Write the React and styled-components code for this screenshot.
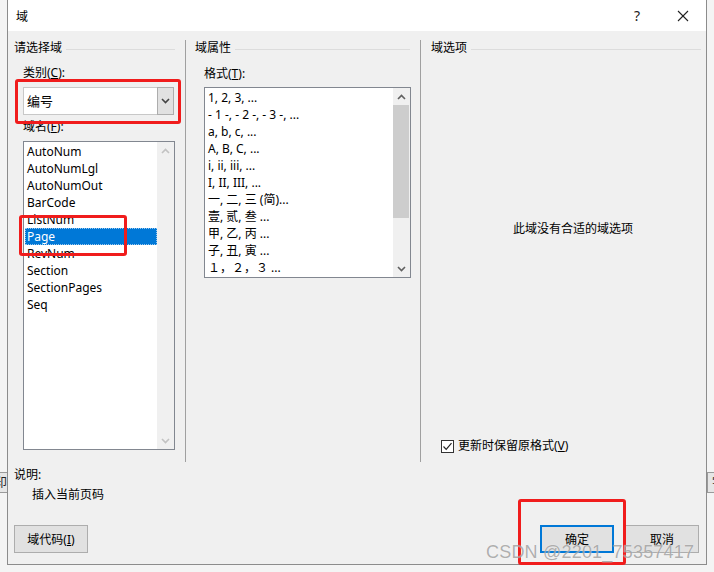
import React from "react";
import styled, { createGlobalStyle } from "styled-components";

const GlobalStyle = createGlobalStyle`
  html, body {
    margin: 0;
    padding: 0;
    background: #f4f4f4;
  }
  * {
    box-sizing: border-box;
  }
`;

const FONT = `"Noto Sans", "Noto Sans CJK SC", sans-serif`;

const categories = [
    "AutoNum", "AutoNumLgl", "AutoNumOut", "BarCode", "ListNum",
    "Page", "RevNum", "Section", "SectionPages", "Seq",
];

const formats = [
    "1, 2, 3, ...",
    "- 1 -, - 2 -, - 3 -, ...",
    "a, b, c, ...",
    "A, B, C, ...",
    "i, ii, iii, ...",
    "I, II, III, ...",
    "一, 二, 三 (简)...",
    "壹, 贰, 叁 ...",
    "甲, 乙, 丙 ...",
    "子, 丑, 寅 ...",
    "１，２，３ ...",
];

const Chevron = ({ up, color = "#333", w = 9, h = 5 }) => (
    <svg width={w} height={h + 1} viewBox="0 0 9 6">
        <polyline
            points={up ? "1,5 4.5,1.5 8,5" : "1,1 4.5,4.5 8,1"}
            fill="none"
            stroke={color}
            strokeWidth="1.6"
        />
    </svg>
);

const App = () => {
    return (
        <Page>
            <GlobalStyle />

            <EdgeColumn>
                <Fragment side="left">印</Fragment>
            </EdgeColumn>

            <Dialog>
                <TitleBar>
                    <Title>域</Title>
                    <TitleButton>?</TitleButton>
                    <TitleButton>
                        <svg width="12" height="12" viewBox="0 0 12 12">
                            <line x1="1" y1="1" x2="11" y2="11" stroke="#222" strokeWidth="1.1" />
                            <line x1="11" y1="1" x2="1" y2="11" stroke="#222" strokeWidth="1.1" />
                        </svg>
                    </TitleButton>
                </TitleBar>

                <Body>
                    <Groups>
                        <Group width="177px">
                            <GroupHeader pl={6} pr={10}>
                                <span>请选择域</span>
                                <HeaderLine />
                            </GroupHeader>
                            <GroupBody pl={15} pr={10}>
                                <Label mt={9}>类别(<u>C</u>):</Label>
                                <Combo>
                                    <ComboText>编号</ComboText>
                                    <ComboButton>
                                        <Chevron color="#444" />
                                    </ComboButton>
                                </Combo>
                                <Label mt={4}>域名(<u>F</u>):</Label>
                                <ListBox mt={6} h={309}>
                                    <ListItems>
                                        {categories.map(c => (
                                            <Item key={c} selected={c === "Page"}>{c}</Item>
                                        ))}
                                    </ListItems>
                                    <ScrollBar>
                                        <Arrow><Chevron up color="#c2c2c2" /></Arrow>
                                        <Track />
                                        <Arrow><Chevron color="#c2c2c2" /></Arrow>
                                    </ScrollBar>
                                </ListBox>
                            </GroupBody>
                        </Group>

                        <Group width="235px" divided>
                            <GroupHeader pl={9} pr={10}>
                                <span>域属性</span>
                                <HeaderLine />
                            </GroupHeader>
                            <GroupBody pl={18} pr={9}>
                                <Label mt={10}>格式(<u>T</u>):</Label>
                                <ListBox mt={5} h={191}>
                                    <ListItems>
                                        {formats.map(f => (
                                            <Item key={f}>{f}</Item>
                                        ))}
                                    </ListItems>
                                    <ScrollBar>
                                        <Arrow><Chevron up color="#606060" /></Arrow>
                                        <Track>
                                            <Thumb style={{ height: 113 }} />
                                        </Track>
                                        <Arrow><Chevron color="#606060" /></Arrow>
                                    </ScrollBar>
                                </ListBox>
                            </GroupBody>
                        </Group>

                        <Group divided grow>
                            <GroupHeader pl={10} pr={5}>
                                <span>域选项</span>
                                <HeaderLine />
                            </GroupHeader>
                            <GroupBody pl={20} pr={5}>
                                <Notice>此域没有合适的域选项</Notice>
                                <CheckRow>
                                    <CheckBox>
                                        <svg width="11" height="11" viewBox="0 0 11 11">
                                            <polyline points="1.5,5.5 4.2,8.3 9.5,2.2" fill="none" stroke="#222" strokeWidth="1.2" />
                                        </svg>
                                    </CheckBox>
                                    <span>更新时保留原格式(<u>V</u>)</span>
                                </CheckRow>
                            </GroupBody>
                        </Group>
                    </Groups>

                    <Caption>说明:</Caption>
                    <Description>插入当前页码</Description>

                    <ButtonRow>
                        <Button>域代码(<u>I</u>)</Button>
                        <Spacer />
                        <Button primary>确定</Button>
                        <Button>取消</Button>
                    </ButtonRow>
                </Body>
            </Dialog>

            <EdgeColumn>
                <Fragment side="right">字</Fragment>
            </EdgeColumn>

            <Mark top={79} left={15} width={166} height={45} />
            <Mark top={215} left={19} width={108} height={41} />
            <Mark top={499} left={518} width={108} height={66} />

            <Watermark>CSDN @2201_75357417</Watermark>
        </Page>
    );
};

const Page = styled.div`
    position: relative;
    display: flex;
    width: 714px;
    height: 572px;
    overflow: hidden;
    font-family: ${FONT};
    font-size: 12px;
    color: #000;
`;

const EdgeColumn = styled.div`
    flex: 1;
    padding-top: 472px;
    overflow: hidden;
`;

const Fragment = styled.div`
    height: 21px;
    width: 20px;
    margin-left: ${p => (p.side === "left" ? "-10px" : "0")};
    background: #e6e6e6;
    border: 1px solid #9a9a9a;
    font-size: 12px;
    line-height: 19px;
    text-indent: 4px;
    color: #222;
`;

const Dialog = styled.div`
    width: 700px;
    height: 565px;
    flex: none;
    display: flex;
    flex-direction: column;
    background: #f0f0f0;
    border: 1px solid #8c8c8c;
    border-top: none;
`;

const TitleBar = styled.div`
    height: 31px;
    background: #fff;
    display: flex;
    align-items: center;
    padding-left: 8px;
`;

const Title = styled.div`
    flex: 1;
    font-size: 12px;
`;

const TitleButton = styled.div`
    width: 46px;
    height: 31px;
    display: flex;
    align-items: center;
    justify-content: center;
    font-size: 14px;
    color: #222;
`;

const Body = styled.div`
    flex: 1;
    display: flex;
    flex-direction: column;
    padding-top: 9px;
`;

const Groups = styled.div`
    display: flex;
    height: 422px;
`;

const Group = styled.div`
    width: ${p => p.width || "auto"};
    flex: ${p => (p.grow ? "1" : "none")};
    display: flex;
    flex-direction: column;
    border-left: ${p => (p.divided ? "1px solid #a0a0a0" : "none")};
`;

const GroupHeader = styled.div`
    display: flex;
    align-items: center;
    gap: 4px;
    height: 16px;
    line-height: 16px;
    padding-left: ${p => p.pl}px;
    padding-right: ${p => p.pr}px;
    white-space: nowrap;
`;

const HeaderLine = styled.div`
    flex: 1;
    height: 1px;
    margin-top: 2px;
    background: #dcdcdc;
`;

const GroupBody = styled.div`
    flex: 1;
    display: flex;
    flex-direction: column;
    padding-left: ${p => p.pl}px;
    padding-right: ${p => p.pr}px;
`;

const Label = styled.div`
    margin-top: ${p => p.mt}px;
    height: 16px;
    line-height: 16px;
    u {
        text-decoration: underline;
    }
`;

const Combo = styled.div`
    margin-top: 6px;
    height: 28px;
    display: flex;
    background: #fff;
    border: 1px solid #c8c8c8;
    margin-right: 1px;
`;

const ComboText = styled.div`
    flex: 1;
    padding-left: 3px;
    line-height: 26px;
    font-size: 13px;
`;

const ComboButton = styled.div`
    width: 17px;
    display: flex;
    align-items: center;
    justify-content: center;
    background: #e1e1e1;
    border: 1px solid #adadad;
    margin: -1px -1px -1px 0;
`;

const ListBox = styled.div`
    margin-top: ${p => p.mt}px;
    height: ${p => p.h}px;
    display: flex;
    background: #fff;
    border: 1px solid #828790;
`;

const ListItems = styled.div`
    flex: 1;
    padding: 1px 0 0 1px;
    overflow: hidden;
`;

const Item = styled.div`
    height: 17px;
    line-height: 17px;
    padding-left: 2px;
    white-space: nowrap;
    background: ${p => (p.selected ? "#0078d7" : "transparent")};
    color: ${p => (p.selected ? "#fff" : "#000")};
    outline: ${p => (p.selected ? "1px dotted #9bc8ee" : "none")};
    outline-offset: -1px;
`;

const ScrollBar = styled.div`
    width: 17px;
    display: flex;
    flex-direction: column;
    background: #f0f0f0;
`;

const Arrow = styled.div`
    height: 17px;
    display: flex;
    align-items: center;
    justify-content: center;
`;

const Track = styled.div`
    flex: 1;
    padding: 0 1px 0 0;
`;

const Thumb = styled.div`
    background: #cdcdcd;
    width: 100%;
`;

const Notice = styled.div`
    margin-top: 165px;
    height: 16px;
    line-height: 16px;
    text-align: center;
    padding-left: 4px;
`;

const CheckRow = styled.div`
    margin-top: 201px;
    display: flex;
    align-items: center;
    gap: 4px;
    height: 16px;
    line-height: 16px;
`;

const CheckBox = styled.div`
    width: 13px;
    height: 13px;
    border: 1px solid #333;
    background: #fff;
    display: flex;
    align-items: center;
    justify-content: center;
`;

const Caption = styled.div`
    margin-top: 5px;
    padding-left: 6px;
    height: 16px;
    line-height: 16px;
`;

const Description = styled.div`
    margin-top: 4px;
    padding-left: 24px;
    height: 16px;
    line-height: 16px;
`;

const ButtonRow = styled.div`
    margin-top: 22px;
    display: flex;
    gap: 11px;
    padding: 0 7px 0 6px;
`;

const Spacer = styled.div`
    flex: 1;
`;

const Button = styled.div`
    width: 74px;
    height: 28px;
    display: flex;
    align-items: center;
    justify-content: center;
    background: #e1e1e1;
    border: ${p => (p.primary ? "2px solid #0078d7" : "1px solid #adadad")};
    u {
        text-decoration: underline;
    }
`;

const Mark = styled.div`
    position: absolute;
    top: ${p => p.top}px;
    left: ${p => p.left}px;
    width: ${p => p.width}px;
    height: ${p => p.height}px;
    border: 3px solid #f01c1c;
    border-radius: 3px;
    pointer-events: none;
`;

const Watermark = styled.div`
    position: absolute;
    left: 486px;
    top: 542px;
    font-family: "Liberation Sans", Arial, sans-serif;
    font-size: 18px;
    letter-spacing: 0.2px;
    color: rgba(110, 110, 110, 0.55);
    text-shadow: 0 0 1px rgba(255, 255, 255, 0.8);
    white-space: nowrap;
`;

export default App;
